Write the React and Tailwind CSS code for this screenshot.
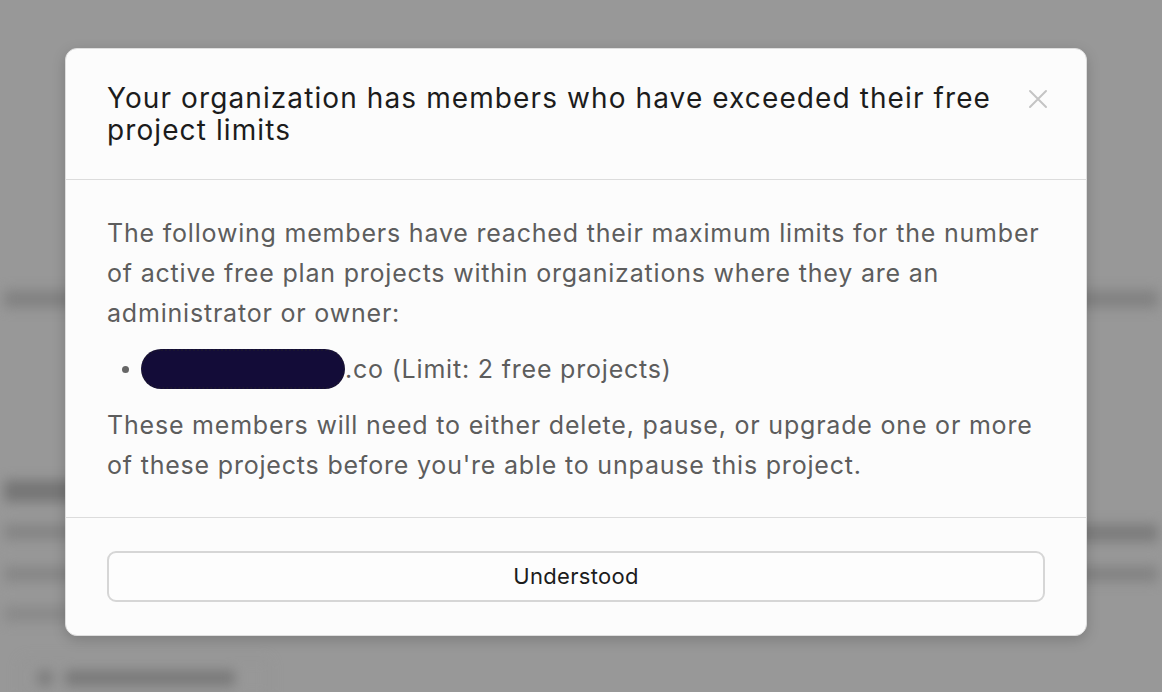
import React from 'react';

const BgLine = ({ className }) => <div className={`rounded-sm ${className}`} />;

const App = () => {
    return (
        <div className="relative h-[692px] w-full overflow-hidden bg-[#989898] font-['Inter',sans-serif]">
            {/* blurred page behind the dialog */}
            <div className="flex flex-col blur-[6px] pt-[290px] px-[4px]">
                <BgLine className="h-[18px] w-full bg-[#828282]" />
                <BgLine className="mt-[172px] h-[22px] w-[60%] bg-[#767676]" />
                <div className="mt-[22px] flex justify-between">
                    <BgLine className="h-[16px] w-[55%] bg-[#858585]" />
                    <BgLine className="h-[18px] w-[8%] bg-[#7c7c7c]" />
                </div>
                <div className="mt-[24px] flex justify-between">
                    <BgLine className="h-[16px] w-[60%] bg-[#878787]" />
                    <BgLine className="h-[16px] w-[9%] bg-[#838383]" />
                </div>
                <BgLine className="mt-[24px] h-[16px] w-[40%] bg-[#8a8a8a]" />
                <div className="mt-[36px] ml-[16px] flex h-[40px] w-[250px] items-center gap-3 rounded-md border border-[#8f8f8f] px-4">
                    <BgLine className="h-[16px] w-[16px] bg-[#7e7e7e]" />
                    <BgLine className="h-[16px] w-[170px] bg-[#7a7a7a]" />
                </div>
            </div>

            {/* dialog */}
            <div className="absolute inset-0">
                <div className="ml-[65px] mt-[48px] w-[1022px] rounded-[12px] border border-[#dedede] bg-[#fcfcfc] shadow-[0_4px_14px_rgba(0,0,0,0.18)]">
                    <div className="flex items-start justify-between gap-6 border-b border-[#dcdcdc] pl-[41px] pr-[38px] py-[33px]">
                        <h2 className="text-[28px] leading-[32px] tracking-[1.1px] text-[#1c1c1c]">
                            Your organization has members who have exceeded their free project limits
                        </h2>
                        <button className="mt-[7px] shrink-0 text-[#c4c4c4]">
                            <svg width="20" height="20" viewBox="0 0 20 20" fill="none" stroke="currentColor" strokeWidth="2" strokeLinecap="round">
                                <path d="M2 2 L18 18 M18 2 L2 18" />
                            </svg>
                        </button>
                    </div>

                    <div className="flex flex-col gap-4 border-b border-[#dcdcdc] pl-[41px] pr-[36px] pt-[33px] pb-[32px] text-[25px] leading-[40px] tracking-[0.8px] text-[#5d5d5d]">
                        <p>
                            The following members have reached their maximum limits for the number of active free plan projects within organizations where they are an administrator or owner:
                        </p>
                        <div className="flex items-center pl-[15px]">
                            <span className="h-[7px] w-[7px] rounded-full bg-[#666666]" />
                            <span className="ml-[12px] h-[40px] w-[204px] rounded-full border-2 border-dotted border-[#1a1530] bg-[#130c38]" />
                            <span>.co (Limit: 2 free projects)</span>
                        </div>
                        <p>
                            These members will need to either delete, pause, or upgrade one or more of these projects before you're able to unpause this project.
                        </p>
                    </div>

                    <div className="px-[41px] pt-[33px] pb-[33px]">
                        <button className="flex h-[51px] w-full items-center justify-center rounded-[9px] border-2 border-[#d6d6d6] bg-[#fdfdfd] text-[22px] tracking-[0.3px] text-[#1c1c1c]">
                            Understood
                        </button>
                    </div>
                </div>
            </div>
        </div>
    );
};

export default App;
